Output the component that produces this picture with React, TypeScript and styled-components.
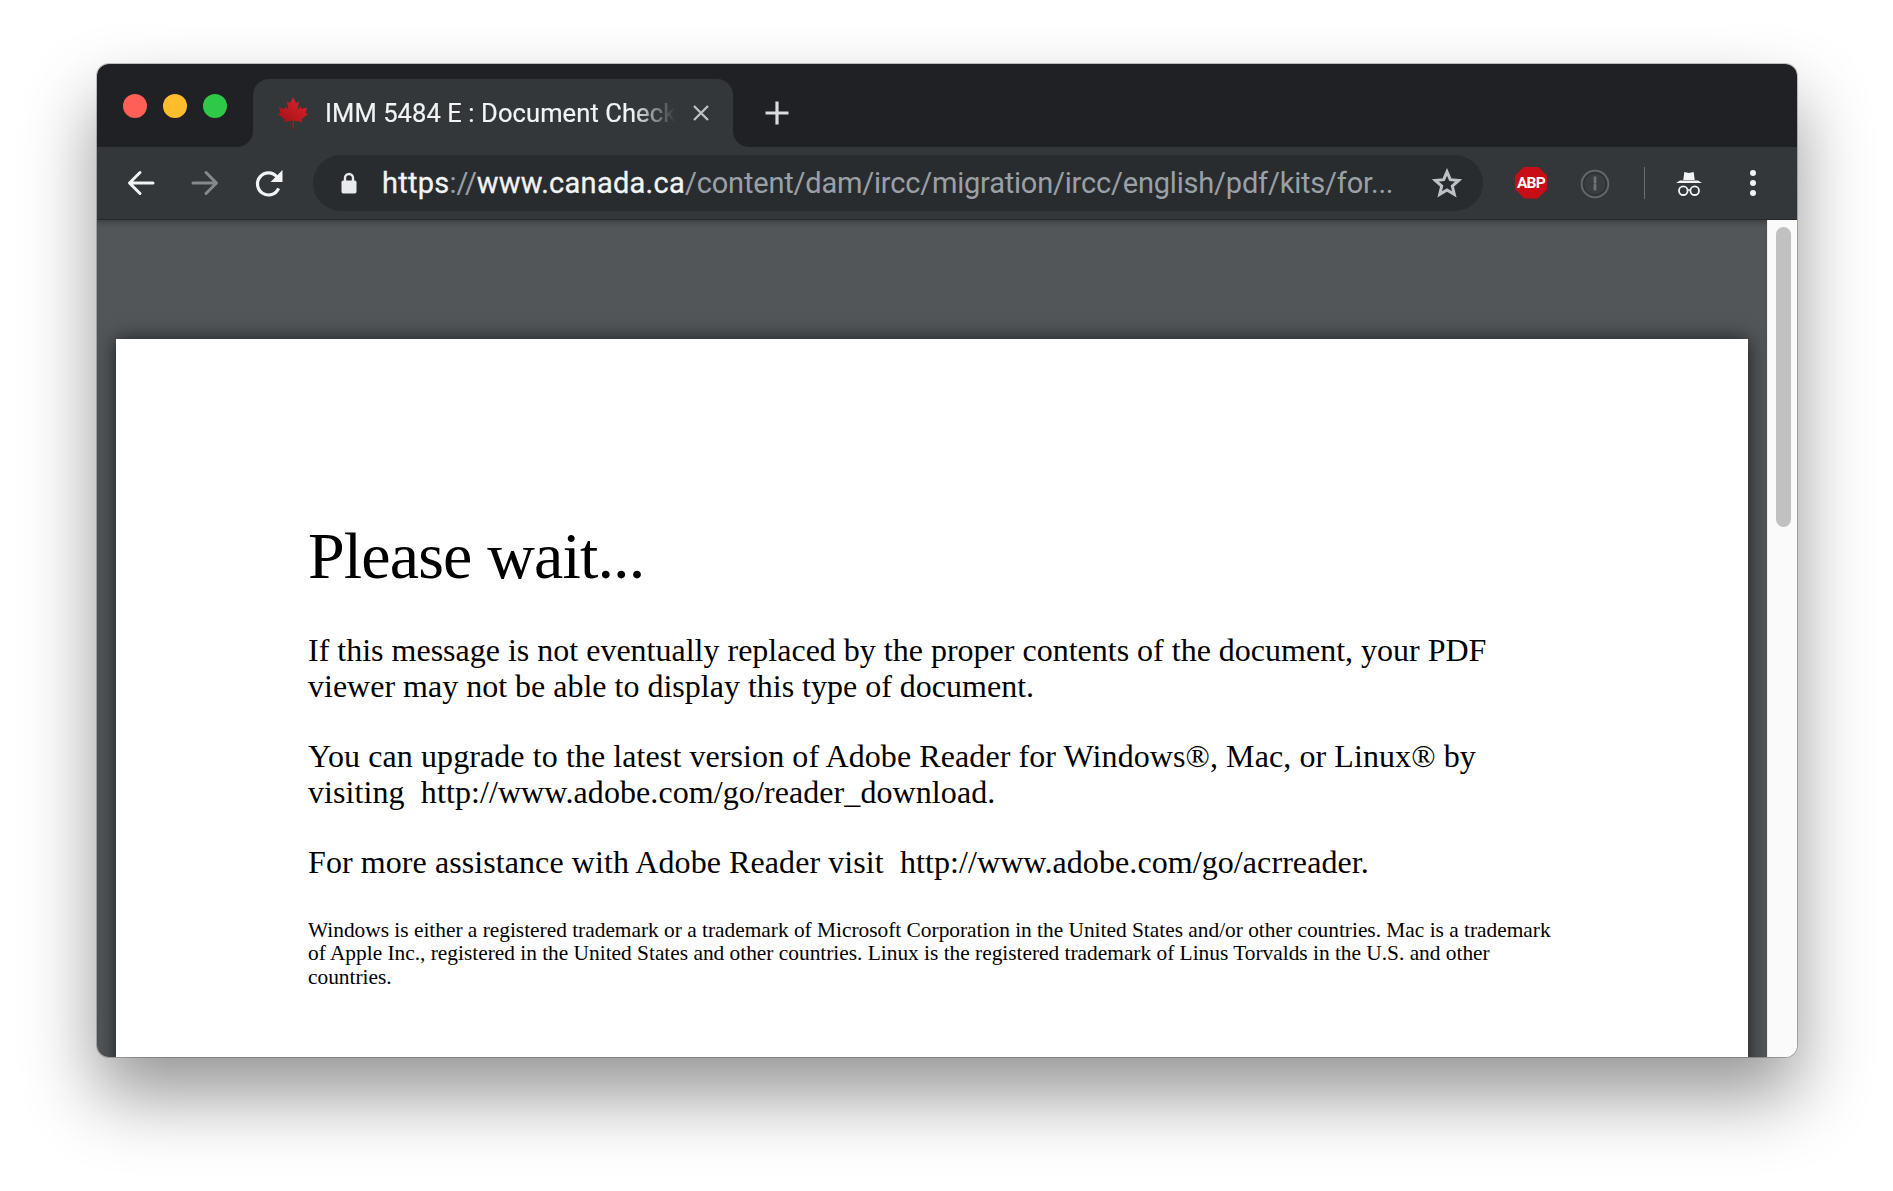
import React from 'react';
import styled, { createGlobalStyle } from 'styled-components';

const GlobalStyle = createGlobalStyle`
  html, body {
    margin: 0;
    background: #fff;
  }
`;

const Stage = styled.div`
  width: 1893px;
  height: 1191px;
  box-sizing: border-box;
  padding: 64px 96px 134px 97px;
  overflow: hidden;
`;

const Window = styled.div`
  height: 993px;
  display: flex;
  flex-direction: column;
  border-radius: 12px;
  overflow: hidden;
  box-shadow: 0 0 0 1px rgba(0, 0, 0, 0.22), 0 38px 72px rgba(0, 0, 0, 0.42);
`;

const TabStrip = styled.div`
  height: 83px;
  flex: none;
  box-sizing: border-box;
  padding-top: 15px;
  display: flex;
  background: #202124;
`;

const Lights = styled.div`
  display: flex;
  gap: 16px;
  padding: 15px 26px 0 26px;
  width: 156px;
  box-sizing: border-box;
`;

const Light = styled.span<{ $color: string }>`
  width: 24px;
  height: 24px;
  border-radius: 50%;
  background: ${p => p.$color};
`;

const Tab = styled.div`
  position: relative;
  width: 480px;
  height: 68px;
  box-sizing: border-box;
  padding: 0 23px 0 23px;
  display: flex;
  align-items: center;
  background: #33373a;
  border-radius: 16px 16px 0 0;

  &::before,
  &::after {
    content: '';
    position: absolute;
    bottom: 0;
    width: 16px;
    height: 16px;
  }
  &::before {
    left: -16px;
    background: radial-gradient(circle at 0 0, #202124 15.5px, #33373a 16.5px);
  }
  &::after {
    right: -16px;
    background: radial-gradient(circle at 100% 0, #202124 15.5px, #33373a 16.5px);
  }
`;

const TabTitle = styled.span`
  flex: 1;
  margin: 0 17px 0 15px;
  overflow: hidden;
  white-space: nowrap;
  font: 400 25.5px 'Roboto', sans-serif;
  letter-spacing: 0.1px;
  -webkit-text-stroke: 0.2px #f1f3f4;
  color: #f1f3f4;
  -webkit-mask-image: linear-gradient(to right, #000 88%, transparent 100%);
  mask-image: linear-gradient(to right, #000 88%, transparent 100%);
`;

const NewTab = styled.div`
  width: 88px;
  height: 68px;
  display: flex;
  align-items: center;
  justify-content: center;
`;

const Toolbar = styled.div`
  height: 73px;
  flex: none;
  box-sizing: border-box;
  padding: 8px 0 9px 12px;
  display: flex;
  align-items: center;
  background: #33373a;
  border-bottom: 1px solid #26282b;
`;

const IconButton = styled.div`
  width: 64px;
  height: 56px;
  flex: none;
  display: flex;
  align-items: center;
  justify-content: center;
`;

const Omnibox = styled.div`
  width: 1170px;
  height: 56px;
  flex: none;
  margin: 0 16px 0 12px;
  box-sizing: border-box;
  padding: 0 21px 0 27px;
  display: flex;
  align-items: center;
  border-radius: 28px;
  background: #292c2f;
`;

const Url = styled.div`
  flex: 1;
  margin-left: 24px;
  padding-top: 1px;
  white-space: nowrap;
  font: 400 29px 'Roboto', sans-serif;
  letter-spacing: -0.2px;
  color: #9aa0a6;
`;

const UrlStrong = styled.span`
  color: #f1f3f4;
  letter-spacing: 0.27px;
  -webkit-text-stroke: 0.3px #f1f3f4;
`;

const AbpBadge = styled.div`
  width: 32px;
  height: 32px;
  display: flex;
  align-items: center;
  justify-content: center;
  background: #c70d15;
  clip-path: polygon(29% 0, 71% 0, 100% 29%, 100% 71%, 71% 100%, 29% 100%, 0 71%, 0 29%);
  font: 700 15.5px 'Roboto', sans-serif;
  letter-spacing: -0.7px;
  color: #fff;
`;

const Divider = styled.div`
  width: 1px;
  height: 32px;
  flex: none;
  margin: 0 12px 0 17px;
  background: #6b6e71;
`;

const Body = styled.div`
  flex: 1;
  min-height: 0;
  display: flex;
`;

const Viewer = styled.div`
  flex: 1;
  min-width: 0;
  overflow: hidden;
  box-sizing: border-box;
  padding: 119px 19px 0;
  background: #525659;
  box-shadow: inset 0 6px 6px -4px rgba(0, 0, 0, 0.3);
`;

const Page = styled.div`
  height: 900px;
  box-sizing: border-box;
  padding: 181px 0 0 192px;
  background: #fff;
  color: #000;
  font-family: 'Liberation Serif', 'Times New Roman', serif;
  box-shadow: 0 0 18px rgba(0, 0, 0, 0.65);
`;

const Heading = styled.div`
  margin-bottom: 41px;
  font-size: 66px;
  line-height: 72px;
  letter-spacing: -0.85px;
  white-space: nowrap;
`;

const Paragraph = styled.div<{ $track?: number }>`
  margin-bottom: 35px;
  font-size: 32px;
  line-height: 35.5px;
  letter-spacing: ${p => p.$track ?? 0}px;
  white-space: nowrap;
`;

const Fine = styled.div`
  margin-top: 38px;
  font-size: 21.4px;
  line-height: 23.6px;
  letter-spacing: -0.015px;
  white-space: nowrap;
`;

const Scrollbar = styled.div`
  width: 30px;
  flex: none;
  box-sizing: border-box;
  padding: 7px 6px 0 8px;
  background: #fafafa;
  border-left: 1px solid #ececec;
`;

const Thumb = styled.div`
  height: 300px;
  border-radius: 8px;
  background: #c1c1c1;
`;

const BackIcon = ({ color }: { color: string }) => (
  <svg width="28" height="26" viewBox="0 0 28 26" fill="none" stroke={color} strokeWidth="3" strokeLinecap="round" strokeLinejoin="round">
    <path d="M26 13H3M13 2.5 2.5 13 13 23.5" />
  </svg>
);

const ForwardIcon = ({ color }: { color: string }) => (
  <svg width="28" height="26" viewBox="0 0 28 26" fill="none" stroke={color} strokeWidth="3" strokeLinecap="round" strokeLinejoin="round">
    <path d="M2 13h23M15 2.5 25.5 13 15 23.5" />
  </svg>
);

const ReloadIcon = () => (
  <svg width="30" height="30" viewBox="0 0 30 30">
    <path d="M24.6 20.3A11 11 0 1 1 23 9" fill="none" stroke="#f1f3f4" strokeWidth="3.2" />
    <path d="M28.500 2v12h-12z" fill="#f1f3f4" />
  </svg>
);

const LockIcon = () => (
  <svg width="18" height="24" viewBox="0 0 18 24">
    <path d="M5 10V7a4 4 0 0 1 8 0v3" fill="none" stroke="#e8eaed" strokeWidth="2.4" />
    <rect x="1.5" y="9.5" width="15" height="13" rx="1.8" fill="#e8eaed" />
  </svg>
);

const StarIcon = () => (
  <svg width="30" height="30" viewBox="0 0 30 30" fill="none" stroke="#bdc1c6" strokeWidth="3" strokeLinejoin="miter">
    <path d="m15 3.8 3.3 7.9 8.5.7-6.5 5.6 2 8.3-7.3-4.4-7.3 4.4 2-8.3-6.5-5.6 8.5-.7z" />
  </svg>
);

const OnePasswordIcon = () => (
  <svg width="30" height="32" viewBox="0 0 30 32">
    <circle cx="15" cy="17" r="13.4" fill="#3a3d40" stroke="#66696b" strokeWidth="1.800" />
    <circle cx="15" cy="17" r="11.2" fill="none" stroke="#2d3033" strokeWidth="1.200" />
    <path d="M13.6 9.500h2.800v6l-.8 1.200.8 1.200v5.600h-2.800v-6l.8-1-.8-1.200z" fill="#707376" />
  </svg>
);

const IncognitoIcon = () => (
  <svg width="28" height="26" viewBox="0 0 28 26">
    <path d="M8.300 10 9.300 2 14 3l4.700-1 1 8z" fill="#f1f3f4" />
    <path d="M1 13h26l-4-2.500H5z" fill="#f1f3f4" />
    <circle cx="8.300" cy="20.700" r="4.300" fill="none" stroke="#f1f3f4" strokeWidth="1.800" />
    <circle cx="19.700" cy="20.700" r="4.300" fill="none" stroke="#f1f3f4" strokeWidth="1.800" />
    <path d="M12.500 20h3" stroke="#f1f3f4" strokeWidth="1.400" />
  </svg>
);

const KebabIcon = () => (
  <svg width="8" height="28" viewBox="0 0 8 28" fill="#f1f3f4">
    <circle cx="4" cy="4" r="3" />
    <circle cx="4" cy="14" r="3" />
    <circle cx="4" cy="24" r="3" />
  </svg>
);

const MapleLeaf = () => (
  <svg width="34" height="34" viewBox="0 0 32 34">
    <defs>
      <linearGradient id="leaf" x1="0.8" y1="0" x2="0.2" y2="1">
        <stop offset="0" stopColor="#d6252c" />
        <stop offset="1" stopColor="#a00f14" />
      </linearGradient>
    </defs>
    <path
      d="M16 1l3 6 3-1.500L20.500 14l3-3.500 1 2.500 5.500-1.500L28.500 17l2.500 1-6.500 5.500 1 2.500-8.500-1V33h-1.500v-8.500L7 26l1-2.500L1 18l2.500-1L2 11.500 7.500 13l1-2.500 3 3.500L10 5.500 13 7z"
      fill="url(#leaf)"
    />
  </svg>
);

const CloseIcon = () => (
  <svg width="18" height="18" viewBox="0 0 18 18" stroke="#bdc1c6" strokeWidth="2.300">
    <path d="m2 2 14 14M16 2 2 16" />
  </svg>
);

const PlusIcon = () => (
  <svg width="26" height="26" viewBox="0 0 26 26" stroke="#dadce0" strokeWidth="3.200">
    <path d="M13 1.500v23M1.500 13h23" />
  </svg>
);

const App: React.FC = () => (
  <>
    <GlobalStyle />
    <Stage>
      <Window>
        <TabStrip>
          <Lights>
            <Light $color="#ff5f57" />
            <Light $color="#ffbd2e" />
            <Light $color="#2fc94a" />
          </Lights>
          <Tab>
            <MapleLeaf />
            <TabTitle>IMM 5484 E : Document Check</TabTitle>
            <CloseIcon />
          </Tab>
          <NewTab>
            <PlusIcon />
          </NewTab>
        </TabStrip>
        <Toolbar>
          <IconButton><BackIcon color="#f1f3f4" /></IconButton>
          <IconButton><ForwardIcon color="#85888c" /></IconButton>
          <IconButton><ReloadIcon /></IconButton>
          <Omnibox>
            <LockIcon />
            <Url>
              <UrlStrong>https</UrlStrong>://<UrlStrong>www.canada.ca</UrlStrong>/content/dam/ircc/migration/ircc/english/pdf/kits/for...
            </Url>
            <StarIcon />
          </Omnibox>
          <IconButton><AbpBadge>ABP</AbpBadge></IconButton>
          <IconButton><OnePasswordIcon /></IconButton>
          <Divider />
          <IconButton><IncognitoIcon /></IconButton>
          <IconButton><KebabIcon /></IconButton>
        </Toolbar>
        <Body>
          <Viewer>
            <Page>
              <Heading>Please wait...</Heading>
              <Paragraph>
                If this message is not eventually replaced by the proper contents of the document, your PDF<br />
                viewer may not be able to display this type of document.
              </Paragraph>
              <Paragraph $track={0.085}>
                You can upgrade to the latest version of Adobe Reader for Windows®, Mac, or Linux® by<br />
                visiting&nbsp; http://www.adobe.com/go/reader_download.
              </Paragraph>
              <Paragraph $track={0.08}>For more assistance with Adobe Reader visit&nbsp; http://www.adobe.com/go/acrreader.</Paragraph>
              <Fine>
                Windows is either a registered trademark or a trademark of Microsoft Corporation in the United States and/or other countries. Mac is a trademark<br />
                of Apple Inc., registered in the United States and other countries. Linux is the registered trademark of Linus Torvalds in the U.S. and other<br />
                countries.
              </Fine>
            </Page>
          </Viewer>
          <Scrollbar>
            <Thumb />
          </Scrollbar>
        </Body>
      </Window>
    </Stage>
  </>
);

export default App;
